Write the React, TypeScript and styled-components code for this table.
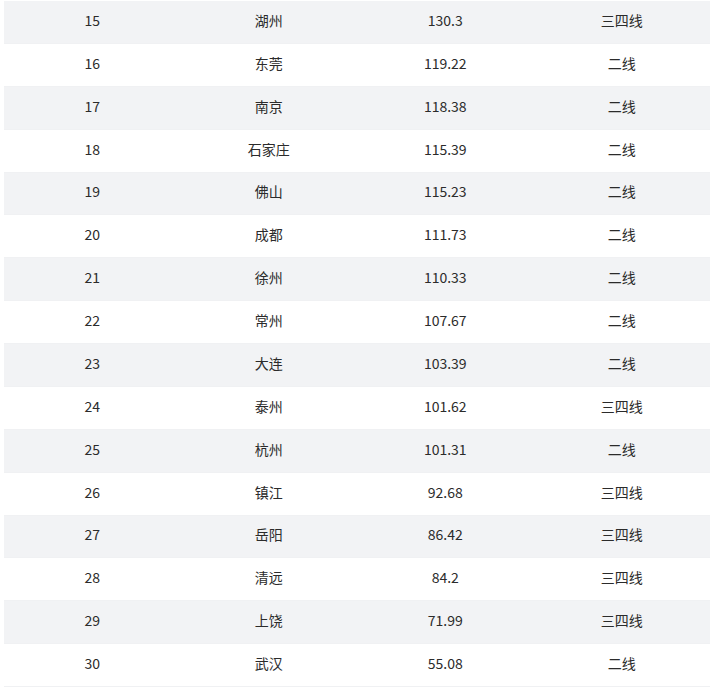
import React from 'react'
import styled, { createGlobalStyle } from 'styled-components'

const rows: [number, string, string, string][] = [
  [15, '湖州', '130.3', '三四线'],
  [16, '东莞', '119.22', '二线'],
  [17, '南京', '118.38', '二线'],
  [18, '石家庄', '115.39', '二线'],
  [19, '佛山', '115.23', '二线'],
  [20, '成都', '111.73', '二线'],
  [21, '徐州', '110.33', '二线'],
  [22, '常州', '107.67', '二线'],
  [23, '大连', '103.39', '二线'],
  [24, '泰州', '101.62', '三四线'],
  [25, '杭州', '101.31', '二线'],
  [26, '镇江', '92.68', '三四线'],
  [27, '岳阳', '86.42', '三四线'],
  [28, '清远', '84.2', '三四线'],
  [29, '上饶', '71.99', '三四线'],
  [30, '武汉', '55.08', '二线'],
]

const GlobalStyle = createGlobalStyle`
  body {
    margin: 0;
    background: #fff;
    font-family: "Noto Sans CJK SC", "Noto Sans", sans-serif;
  }
`

const App = () => {
  return (
    <>
      <GlobalStyle />
      <Table>
        {rows.map(([rank, city, value, tier]) => (
          <Row key={rank} $striped={rank % 2 === 1}>
            <Cell>{rank}</Cell>
            <Cell>{city}</Cell>
            <Cell>{value}</Cell>
            <Cell>{tier}</Cell>
          </Row>
        ))}
      </Table>
    </>
  )
}

export default App

const Table = styled.div`
  width: 706px;
  margin: 1px 0 0 4px;
  display: flex;
  flex-direction: column;
`

const Row = styled.div<{ $striped?: boolean }>`
  display: grid;
  grid-template-columns: repeat(4, 1fr);
  align-items: center;
  height: 42.875px;
  box-sizing: border-box;
  padding-bottom: 4px;
  background: ${p => (p.$striped ? '#f2f3f5' : '#fff')};
  border-bottom: 1px solid #f0f1f3;
`

const Cell = styled.div`
  text-align: center;
  font-size: 14px;
  color: #2b2b2b;
  line-height: 20px;
`
